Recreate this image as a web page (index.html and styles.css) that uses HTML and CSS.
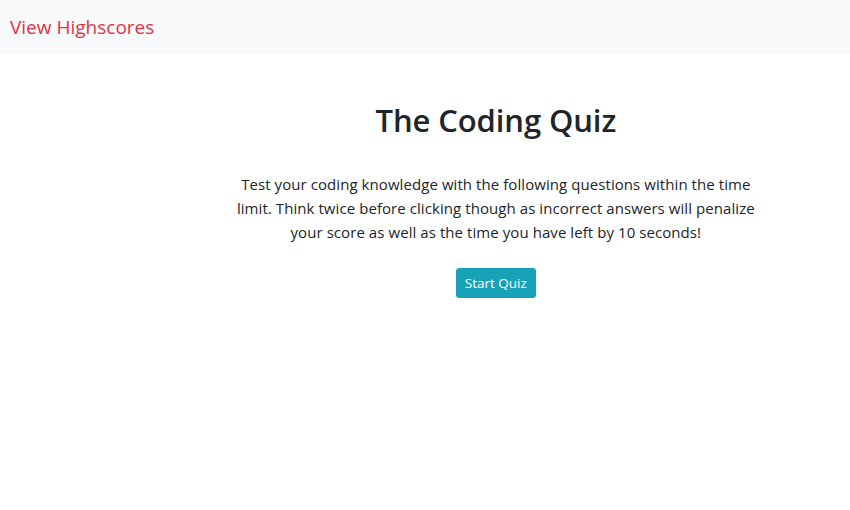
FILE: index.html
```html
<!DOCTYPE html>
<html lang="en">
<head>
<meta charset="utf-8">
<title>The Coding Quiz</title>
<link rel="stylesheet" href="styles.css">
</head>
<body>
<nav class="navbar">
  <a class="brand" href="#">View Highscores</a>
</nav>
<main class="row">
  <section class="col">
    <h1 class="title">The Coding Quiz</h1>
    <p class="intro">Test your coding knowledge with the following questions within the time limit. Think twice before clicking though as incorrect answers will penalize your score as well as the time you have left by 10 seconds!</p>
    <button class="btn" type="button">Start Quiz</button>
  </section>
</main>
</body>
</html>
```

FILE: styles.css
```css
* { box-sizing: border-box; }
body {
  margin: 0;
  font-family: "Open Sans", "Noto Sans", sans-serif;
  color: #212529;
  background: #fff;
}
.navbar {
  height: 54px;
  background: #f8f9fa;
  display: flex;
  align-items: center;
  padding: 0 10px;
}
.brand {
  color: #dc3545;
  text-decoration: none;
  font-size: 19px;
  line-height: 30px;
  letter-spacing: 0;
}
.row { display: flex; }
.col {
  margin-left: 25%;
  width: 66.6667%;
  padding: 0 15px;
  text-align: center;
}
.title {
  margin: 47px 0 0;
  font-size: 31px;
  font-weight: 600;
  line-height: 38px;
  letter-spacing: -0.1px;
}
.intro {
  margin: 33px 0 24px;
  font-size: 15px;
  line-height: 24px;
  letter-spacing: 0.07px;
}
.btn {
  font-family: inherit;
  font-size: 13.5px;
  line-height: 20px;
  padding: 4px 8px;
  border: 1px solid #17a2b8;
  border-radius: 3px;
  background: #17a2b8;
  color: #fff;
  cursor: pointer;
}
```
